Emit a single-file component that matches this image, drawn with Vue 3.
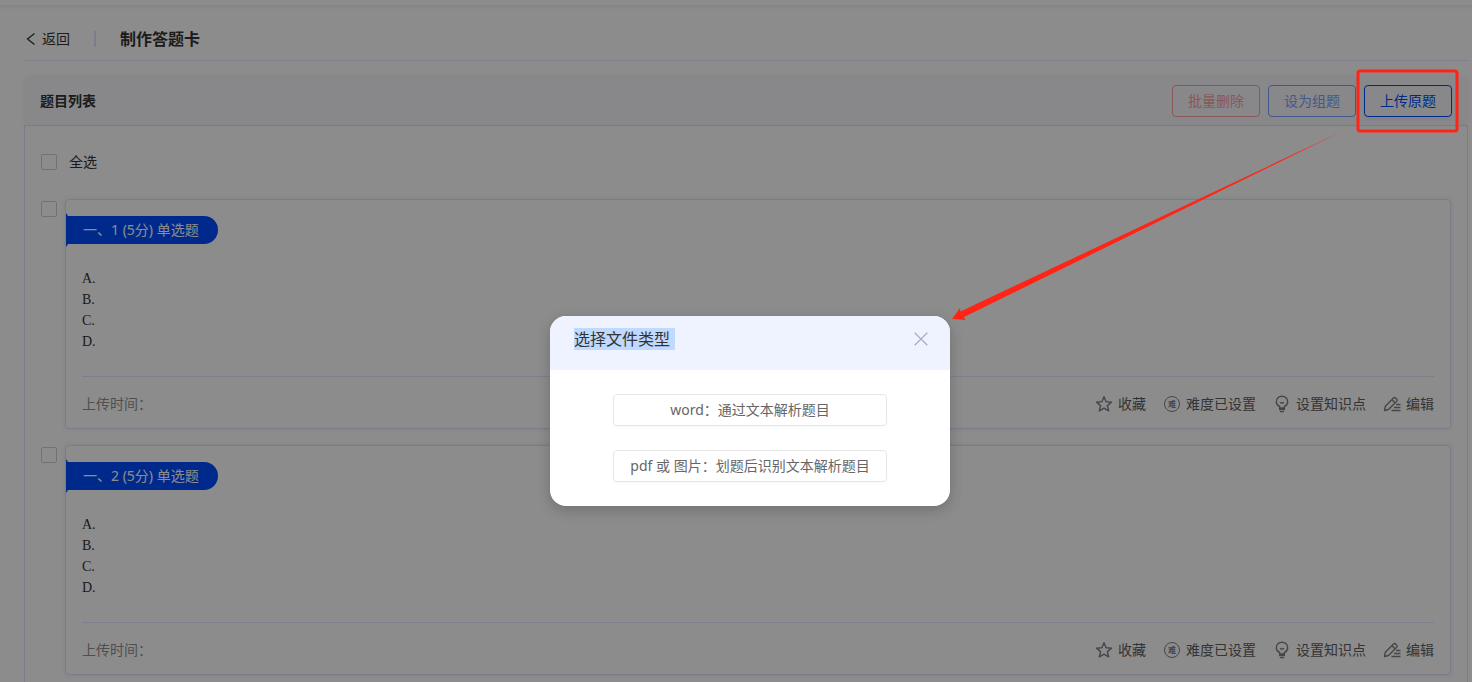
<script setup>
import { ref } from 'vue'

const allChecked = ref(false)
const questions = ref([
  { id: 1, title: '一、1 (5分) 单选题', checked: false },
  { id: 2, title: '一、2 (5分) 单选题', checked: false },
])
const options = ['A.', 'B.', 'C.', 'D.']
</script>

<template>
  <div class="page">
    <div class="topbar"></div>
    <main class="content">
      <header class="heading">
        <a class="back" href="#">
          <svg width="10" height="14" viewBox="0 0 10 14" fill="none" stroke="currentColor" stroke-width="1.3"><path d="M8.500 1.500L1.500 7l7 5.500" /></svg>
          返回
        </a>
        <span class="bar"></span>
        <h1>制作答题卡</h1>
      </header>

      <section class="panel">
        <div class="panel-head">
          <h2>题目列表</h2>
          <div class="tools">
            <button class="btn danger" type="button" disabled>批量删除</button>
            <button class="btn muted" type="button" disabled>设为组题</button>
            <button class="btn" type="button">上传原题</button>
          </div>
        </div>
        <div class="panel-body">
          <label class="all"><input v-model="allChecked" type="checkbox" />全选</label>
          <div v-for="q in questions" :key="q.id" class="row">
            <input v-model="q.checked" type="checkbox" :aria-label="q.title" />
            <article class="card">
              <div class="ribbon">{{ q.title }}</div>
              <div class="options">
                <div v-for="o in options" :key="o">{{ o }}</div>
              </div>
              <footer class="foot">
                <span class="time">上传时间：</span>
                <button class="action" type="button">
                  <svg width="18" height="18" viewBox="0 0 18 18" fill="none" stroke="currentColor" stroke-width="1.4" stroke-linejoin="round"><path d="M9 1.700l2.100 5 5.400.400-4.100 3.500 1.300 5.300L9 13.100l-4.700 2.800 1.300-5.300-4.100-3.500 5.400-.400z" /></svg>
                  收藏
                </button>
                <button class="action" type="button">
                  <span class="level">难</span>
                  难度已设置
                </button>
                <button class="action" type="button">
                  <svg width="18" height="18" viewBox="0 0 18 18" fill="none" stroke="currentColor" stroke-width="1.4"><path d="M6.600 13v-1.500C4.600 10.500 3.300 9 3.300 6.900a5.700 5.700 0 0 1 11.400 0c0 2.100-1.300 3.600-3.300 4.600V13zM6 14.500h6M7 16.600h4M7 7.300q2 1.700 4 0" /></svg>
                  设置知识点
                </button>
                <button class="action" type="button">
                  <svg width="18" height="18" viewBox="0 0 18 18" fill="none" stroke="currentColor" stroke-width="1.4" stroke-linejoin="round"><path d="M1.500 15.500l.8-4.200 8.200-8.200q1-1 2 0l1.200 1.200q1 1 0 2l-8.200 8.200zM9 4.700l3.200 3.200M13 9.500h4.500M11 12.500h6.500M8.500 15.500h9" /></svg>
                  编辑
                </button>
              </footer>
            </article>
          </div>
        </div>
      </section>
    </main>

    <div class="mask">
      <div class="dialog" role="dialog" aria-labelledby="dialog-title">
        <div class="dialog-head">
          <h3 id="dialog-title">选择文件类型</h3>
          <button class="close" type="button" aria-label="关闭">
            <svg width="14" height="14" viewBox="0 0 14 14" fill="none" stroke="currentColor" stroke-width="1.3"><path d="M.7.7l12.600 12.600M13.300.7L.7 13.300" /></svg>
          </button>
        </div>
        <div class="dialog-body">
          <button class="choice" type="button">word：通过文本解析题目</button>
          <button class="choice" type="button">pdf 或 图片：划题后识别文本解析题目</button>
        </div>
      </div>
    </div>

    <svg class="marks" width="520" height="340" viewBox="952 0 520 340" aria-hidden="true">
      <defs>
        <linearGradient id="tail" gradientUnits="userSpaceOnUse" x1="1350" y1="128" x2="1290" y2="156">
          <stop offset="0" stop-color="#ff2415" stop-opacity="0.6" />
          <stop offset="1" stop-color="#ff2415" />
        </linearGradient>
      </defs>
      <path d="M952 319l8-11 .5 3.500L1348 128.500 964 317l1.500 3z" fill="url(#tail)" />
      <rect x="1358" y="71" width="99" height="60" rx="2" fill="none" stroke="#ff2415" stroke-width="3" />
    </svg>
  </div>
</template>

<style>
html,
body {
  overflow: hidden;
}
</style>

<style scoped>
.page {
  position: relative;
  height: 100vh;
  overflow: hidden;
  background: #fff;
  color: #333;
  font: 14px/22px "Noto Sans", "Noto Sans CJK SC", sans-serif;
}
.page * {
  box-sizing: border-box;
}
button {
  font: inherit;
  margin: 0;
}
h1,
h2,
h3 {
  margin: 0;
}
.topbar {
  height: 5px;
  box-shadow: 0 1px 4px rgba(0, 0, 0, 0.12);
}
.content {
  padding: 12px 4px 0 24px;
}
.heading {
  display: flex;
  align-items: center;
  height: 44px;
  border-bottom: 1px solid #e6eaff;
}
.back {
  display: flex;
  align-items: center;
  gap: 6px;
  padding-left: 2px;
  color: inherit;
  text-decoration: none;
}
.bar {
  width: 2px;
  height: 16px;
  margin: 0 24px;
  background: #dfe5fa;
}
h1 {
  font-size: 16px;
  font-weight: 600;
}
.panel {
  margin-top: 15px;
}
.panel-head {
  display: flex;
  align-items: center;
  justify-content: space-between;
  height: 49px;
  padding: 0 16px;
  border-radius: 8px 8px 0 0;
  background: #f7f8fc;
  box-shadow: 0 0 4px rgba(30, 50, 90, 0.06);
}
h2 {
  font-size: 14px;
  font-weight: 600;
}
.tools {
  display: flex;
  gap: 8px;
}
.btn {
  width: 88px;
  height: 32px;
  padding: 0;
  border: 1px solid #004bff;
  border-radius: 4px;
  background: transparent;
  color: #004bff;
  box-shadow: 0 2px 4px rgba(0, 40, 120, 0.06);
}
.btn.muted {
  border-color: #7da0ff;
  color: #7da0ff;
  box-shadow: none;
}
.btn.danger {
  border-color: #fa9e9c;
  color: #fa9e9c;
  box-shadow: none;
}
.panel-body {
  height: 800px;
  padding: 25px 16px 0;
  border: 1px solid #dfe4fa;
}
input {
  appearance: none;
  flex: none;
  width: 16px;
  height: 16px;
  margin: 0;
  border: 1px solid #d0d0d0;
  border-radius: 2px;
}
.all {
  display: flex;
  align-items: center;
  gap: 12px;
  margin-bottom: 26px;
}
.row {
  display: flex;
  gap: 8px;
  margin-bottom: 16px;
}
.row input {
  margin-top: 2px;
}
.card {
  flex: 1;
  height: 230px;
  padding: 16px 16px 0;
  border: 1px solid #dfe4fa;
  border-radius: 4px;
  box-shadow: 0 0 5px rgba(30, 50, 120, 0.1);
}
.ribbon {
  position: relative;
  width: 152px;
  height: 28px;
  margin-left: -16px;
  padding-left: 17px;
  border-radius: 0 14px 14px 0;
  background: #004bff;
  color: #fff;
  line-height: 28px;
}
.ribbon::before {
  content: "";
  position: absolute;
  left: 0;
  top: -3px;
  width: 2px;
  height: 34px;
  background: #004bff;
  clip-path: polygon(0 0, 100% 3px, 100% 31px, 0 100%);
}
.options {
  height: 133px;
  padding-top: 24px;
  border-bottom: 1px solid #e3e8fc;
  font: 14px/21px "Liberation Serif", serif;
}
.foot {
  display: flex;
  align-items: center;
  gap: 17px;
  height: 54px;
}
.time {
  margin-right: auto;
  color: #909090;
}
.action {
  display: flex;
  align-items: center;
  gap: 5px;
  padding: 0;
  border: 0;
  background: none;
  color: #606060;
}
.action svg,
.level {
  color: #808080;
}
.level {
  width: 16px;
  height: 16px;
  margin: 0 1px;
  border: 1px solid currentColor;
  border-radius: 50%;
  font-size: 8px;
  font-weight: 700;
  line-height: 14px;
  text-align: center;
}
.mask {
  position: absolute;
  inset: 0;
  display: flex;
  align-items: flex-start;
  justify-content: center;
  padding: 316px 0 0 28px;
  background: rgba(0, 0, 0, 0.45);
}
.dialog {
  width: 400px;
  overflow: hidden;
  border-radius: 16px;
  background: #fff;
  box-shadow: 0 4px 14px rgba(0, 0, 0, 0.2);
}
.dialog-head {
  display: flex;
  align-items: flex-start;
  justify-content: space-between;
  height: 54px;
  padding: 12px 22px 0 24px;
  background: #eff3ff;
}
h3 {
  padding-right: 5px;
  background: #bfd9ff;
  font-size: 16px;
  font-weight: 400;
}
.close {
  display: flex;
  align-items: center;
  height: 22px;
  padding: 0;
  border: 0;
  background: none;
  color: #a3aec8;
}
.dialog-body {
  display: flex;
  flex-direction: column;
  align-items: center;
  gap: 24px;
  padding: 24px;
}
.choice {
  width: 274px;
  height: 32px;
  padding: 0;
  border: 1px solid #e6e6e6;
  border-radius: 4px;
  background: #fff;
  color: #666;
  box-shadow: 0 2px 2px rgba(0, 0, 0, 0.02);
}
.marks {
  position: absolute;
  top: 0;
  right: 0;
}
</style>
